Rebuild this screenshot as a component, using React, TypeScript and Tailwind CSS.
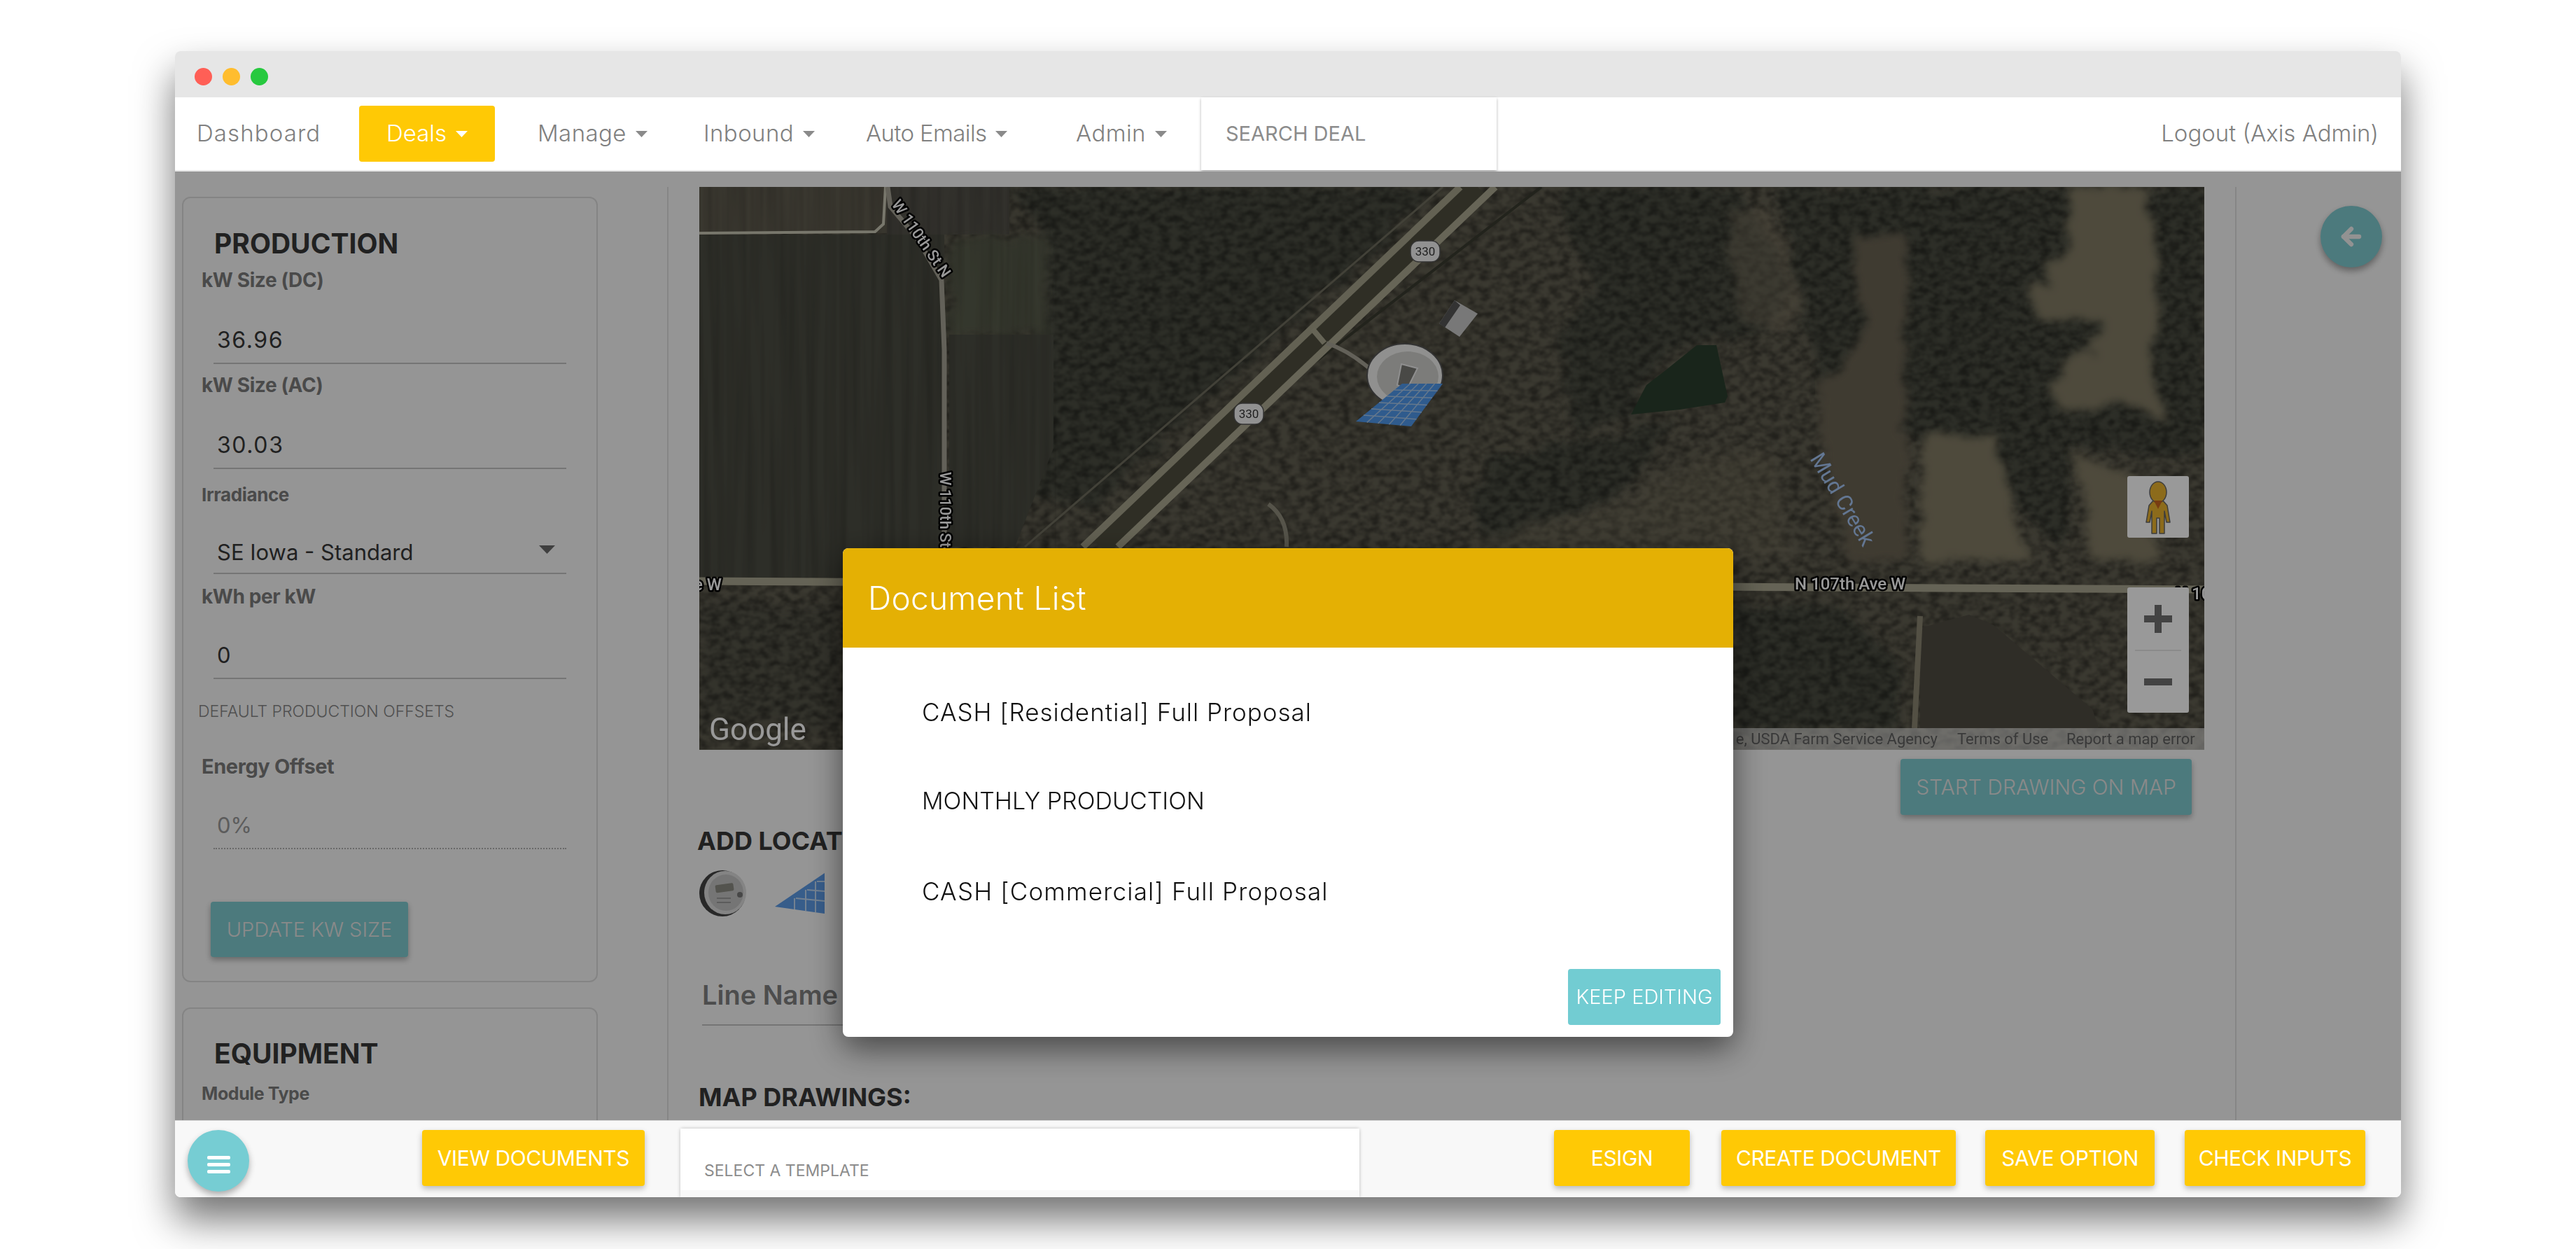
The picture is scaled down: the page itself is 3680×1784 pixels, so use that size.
import { ArrowLeft } from "lucide-react";

function Caret({ className = "text-[#8a8a8a]" }: { className?: string }) {
  return (
    <svg width="17" height="9" viewBox="0 0 17 9" className={`ml-[13px] ${className}`}>
      <polygon points="0,0 17,0 8.5,9" fill="currentColor" />
    </svg>
  );
}

function Label({ children, size = "text-[28px]" }: { children: string; size?: string }) {
  return (
    <div className={`flex h-[40px] items-center pl-[26px] font-bold tracking-[-0.4px] text-[#7c7c7c] ${size}`}>
      {children}
    </div>
  );
}

function Input({ value, h, pb, dotted, wide }: { value: string; h: string; pb: string; dotted?: boolean; wide?: boolean }) {
  return (
    <div
      className={`ml-[43px] flex w-[504px] items-end pl-[5px] leading-[32px] ${h} ${pb} ${
        wide ? "text-[32px] tracking-[1.6px]" : "text-[31px]"
      } ${dotted ? "border-b-2 border-dotted border-[#b0b0b0] text-[#9a9a9a]" : "border-b-2 border-[#c4c4c4] text-[#383838]"}`}
    >
      {value}
    </div>
  );
}

function YellowButton({ label, w }: { label: string; w: string }) {
  return (
    <div
      className={`flex h-[80px] shrink-0 items-center justify-center rounded-[4px] bg-[#ffc905] text-[30px] font-normal tracking-[-0.4px] text-white shadow-[0_4px_8px_rgba(0,0,0,0.25)] ${w}`}
    >
      {label}
    </div>
  );
}

function SolarPanel() {
  const tl = [2003, 548];
  const tr = [2061, 548];
  const br = [2016, 609];
  const bl = [1937, 602];
  const lerp = (a: number[], b: number[], t: number) => [a[0] + (b[0] - a[0]) * t, a[1] + (b[1] - a[1]) * t];
  const lines = [];
  for (let i = 1; i < 6; i++) {
    const a = lerp(tl, bl, i / 6);
    const b = lerp(tr, br, i / 6);
    lines.push(<line key={`r${i}`} x1={a[0]} y1={a[1]} x2={b[0]} y2={b[1]} stroke="#a9c8ea" strokeWidth="1.5" />);
  }
  for (let i = 1; i < 5; i++) {
    const a = lerp(tl, tr, i / 5);
    const b = lerp(bl, br, i / 5);
    lines.push(<line key={`c${i}`} x1={a[0]} y1={a[1]} x2={b[0]} y2={b[1]} stroke="#a9c8ea" strokeWidth="1.5" />);
  }
  return (
    <g>
      <polygon points="2003,548 2061,548 2016,609 1937,602" fill="#4f98ec" />
      {lines}
    </g>
  );
}

function MapLabel({ x, y, text, rotate = 0, size = 22, anchor = "start" }: { x: number; y: number; text: string; rotate?: number; size?: number; anchor?: "start" | "end" }) {
  return (
    <text
      transform={`translate(${x},${y}) rotate(${rotate})`}
      textAnchor={anchor}
      fontSize={size}
      fontFamily="Roboto, sans-serif"
      fontWeight="500"
      fill="#fff"
      stroke="#000"
      strokeWidth="5"
      paintOrder="stroke"
      strokeLinejoin="round"
    >
      {text}
    </text>
  );
}

function Shield({ x, y }: { x: number; y: number }) {
  return (
    <g>
      <rect x={x - 21} y={y - 15} width="42" height="30" rx="12" fill="#f2f2f2" stroke="#555" strokeWidth="1.5" />
      <text x={x} y={y + 6} textAnchor="middle" fontSize="17" fontFamily="Roboto, sans-serif" fill="#333">
        330
      </text>
    </g>
  );
}

function MapPicture() {
  return (
    <svg viewBox="999 267 2150 804" className="block h-[804px] w-[2150px]">
      <defs>
        <filter id="rough" x="-5%" y="-5%" width="110%" height="110%">
          <feTurbulence type="fractalNoise" baseFrequency="0.02 0.03" numOctaves="4" seed="4" />
          <feDisplacementMap in="SourceGraphic" scale="34" />
          <feGaussianBlur stdDeviation="6" />
        </filter>
        <filter id="mottle" x="0" y="0" width="100%" height="100%">
          <feTurbulence type="fractalNoise" baseFrequency="0.07 0.11" numOctaves="3" seed="9" />
          <feColorMatrix values="0 0 0 0 0  0 0 0 0 0  0 0 0 0 0  2.4 0 0 0 -0.85" />
          <feGaussianBlur stdDeviation="1.2" />
        </filter>
        <filter id="stripes" x="0" y="0" width="100%" height="100%">
          <feTurbulence type="fractalNoise" baseFrequency="0.09 0.003" numOctaves="2" seed="3" />
          <feColorMatrix values="0 0 0 0 0  0 0 0 0 0  0 0 0 0 0  1.6 0 0 0 -0.55" />
        </filter>
      </defs>

      <rect x="999" y="267" width="2150" height="804" fill="#625f51" />

      <g filter="url(#rough)" fill="#4c4e42">
        <polygon points="1440,267 2060,267 1700,590 1560,720 1480,720 1490,600 1470,500 1500,430 1490,330" />
        <polygon points="2240,267 2480,267 2560,400 2520,470 2380,500 2330,590 2250,620 2230,480 2280,400 2240,340" />
        <polygon points="2140,650 2320,620 2400,590 2300,720 2120,780 2100,700" />
        <polygon points="2540,267 3149,267 3149,650 2960,640 2950,790 2860,700 2730,620 2600,560" />
        <polygon points="2479,870 2620,860 2716,950 2716,1040 2479,1040" />
        <polygon points="999,860 1204,860 1204,1040 999,1040" fill="#565549" />
      </g>

      <rect x="999" y="267" width="2150" height="804" filter="url(#mottle)" opacity="0.42" />

      {/* open ground stays smoother than the tree cover */}
      <g filter="url(#rough)" fill="#827b65">
        <polygon points="2959,267 3067,267 3087,463 3067,530 3094,598 3026,581 2938,581 2925,547 3000,490 3006,459 2911,456 2898,412 2952,361" />
        <polygon points="2749,618 2850,618 2885,760 2905,800 2745,800 2745,700" />
        <polygon points="2965,650 3050,680 3090,800 2990,800" />
        <polygon points="2465,294 2530,300 2590,460 2550,470 2490,460 2470,370" opacity="0.45" />
        <polygon points="2100,770 2300,720 2440,650 2540,650 2560,800 2100,800" opacity="0.3" />
      </g>
      <g filter="url(#rough)" fill="#6b6352">
        <polygon points="2648,334 2722,334 2720,600 2730,800 2640,800 2600,620 2600,550 2660,480" />
      </g>

      {/* flat fields left of the county road */}
      <rect x="999" y="267" width="268" height="66" fill="#605c4f" />
      <rect x="1267" y="267" width="175" height="68" fill="#54524a" />
      <rect x="999" y="335" width="350" height="490" fill="#4c4d43" />
      <polygon points="1356,336 1497,336 1497,478 1356,478" fill="#595b4c" filter="url(#rough)" />
      <polygon points="1356,478 1505,478 1505,640 1450,781 1356,781" fill="#4c4d43" />
      <rect x="999" y="267" width="510" height="560" filter="url(#stripes)" opacity="0.2" />
      <polygon points="2743,897 2813,878 2848,893 2989,1013 2998,1040 2743,1040" fill="#4f4b42" />

      {/* roads */}
      <polyline points="999,333 1250,331 1262,320 1265,267" fill="none" stroke="#c9c6b4" strokeWidth="4" />
      <polyline points="1268,267 1272,295 1310,340 1345,400 1349,500 1349,825" fill="none" stroke="#a5a294" strokeWidth="7" />
      <line x1="999" y1="830" x2="3149" y2="842" stroke="#a9a68f" strokeWidth="11" />
      <line x1="2061" y1="267" x2="1464" y2="781" stroke="#6f6d5e" strokeWidth="3" />
      <line x1="2202" y1="267" x2="1854" y2="536" stroke="#3a3b30" strokeWidth="4" />
      <line x1="2111" y1="267" x2="1572" y2="781" stroke="#4f4e3f" strokeWidth="30" />
      <line x1="2086" y1="267" x2="1547" y2="781" stroke="#a5a28b" strokeWidth="10" />
      <line x1="2136" y1="267" x2="1597" y2="781" stroke="#aca991" strokeWidth="10" />
      <line x1="1875" y1="470" x2="1892" y2="490" stroke="#aaa78f" strokeWidth="8" />
      <path d="M1895 490 Q1925 500 1955 525" fill="none" stroke="#a5a294" strokeWidth="6" />
      <path d="M1812 720 Q1840 740 1838 781" fill="none" stroke="#8f8c7c" strokeWidth="6" />
      <path d="M2743 880 L2735 1040" fill="none" stroke="#8a8572" strokeWidth="8" />

      {/* buildings and pond */}
      <polygon points="2424,493 2452,493 2468,566 2464,575 2400,585 2330,592 2352,550 2378,530" fill="#2b3f2d" />
      <polygon points="2078,429 2111,448 2085,481 2056,462" fill="#c8c8c8" />
      <polygon points="2078,429 2056,462 2064,468 2086,436" fill="#555" />
      <ellipse cx="2007" cy="536" rx="54" ry="45" fill="#f0f0ee" stroke="#555" strokeWidth="2" />
      <ellipse cx="2011" cy="538" rx="44" ry="36" fill="#cfcfcb" />
      <polygon points="2002,520 2025,526 2010,556 1996,550" fill="#7a7a76" stroke="#eee" strokeWidth="2" />
      <SolarPanel />

      <Shield x={2036} y={359} />
      <Shield x={1784} y={591} />
      <MapLabel x={1273} y={292} text="W 110th St N" rotate={55} />
      <MapLabel x={1343} y={674} text="W 110th St" rotate={90} />
      <MapLabel x={1031} y={843} text="N 107th Ave W" anchor="end" size={24} />
      <MapLabel x={2564} y={842} text="N 107th Ave W" size={24} />
      <MapLabel x={3108} y={856} text="N 107th" size={24} />
      <text transform="translate(2585,655) rotate(59)" fontSize="31" fontFamily="Roboto, sans-serif" fill="#a6c6f5">
        Mud Creek
      </text>
      <text x="1013" y="1057" fontSize="44" fontFamily="Roboto, sans-serif" fontWeight="400" fill="#fff">
        Google
      </text>

      {/* attribution strip */}
      <rect x="2400" y="1040" width="749" height="31" fill="#fff" opacity="0.55" />
      <g fontSize="22" fontFamily="Roboto, sans-serif" fill="#606060">
        <text x="2768" y="1063" textAnchor="end">
          e, USDA Farm Service Agency
        </text>
        <text x="2796" y="1063">Terms of Use</text>
        <text x="2952" y="1063">Report a map error</text>
      </g>
    </svg>
  );
}

function Pegman() {
  return (
    <svg viewBox="0 0 88 88" className="h-[88px] w-[88px]">
      <g stroke="#666" strokeWidth="1.5" strokeLinejoin="round">
        <path d="M31 42 L38 34 H50 L57 42 L61 66 L56 66 L53 50 V82 H46 V60 H42 V82 H35 V50 L32 66 L27 66 Z" fill="#e9b22d" />
        <ellipse cx="44" cy="23" rx="12" ry="15" fill="#e9b22d" />
      </g>
      <polygon points="38,35 50,35 44,47" fill="#c8641e" />
    </svg>
  );
}

function MeterIcon() {
  return (
    <svg viewBox="0 0 68 67" className="h-[67px] w-[68px]">
      <ellipse cx="33" cy="34" rx="33" ry="33" fill="#444" />
      <ellipse cx="37" cy="33" rx="30" ry="31" fill="#dcdcdc" />
      <ellipse cx="38" cy="33" rx="25" ry="26" fill="#c4c4c4" />
      <rect x="23" y="21" width="26" height="11" rx="2" fill="#8b8b82" transform="rotate(-8 34 26)" />
      <circle cx="58" cy="36" r="4" fill="#777" />
      <rect x="25" y="40" width="20" height="2" fill="#999" />
      <rect x="25" y="46" width="20" height="2" fill="#999" />
    </svg>
  );
}

function SolarIcon() {
  return (
    <svg viewBox="0 0 72 58" className="ml-[40px] h-[58px] w-[72px]">
      <polygon points="71,0 71,58 0,48" fill="#5d9be6" />
      <g stroke="#c0d8f2" strokeWidth="2">
        <line x1="58" y1="12" x2="58" y2="56" />
        <line x1="44" y1="24" x2="44" y2="54" />
        <line x1="28" y1="36" x2="28" y2="52" />
        <line x1="60" y1="12" x2="71" y2="12" />
        <line x1="46" y1="24" x2="71" y2="26" />
        <line x1="30" y1="36" x2="71" y2="40" />
      </g>
    </svg>
  );
}

export default function App() {
  return (
    <div className="h-[1784px] w-[3680px] overflow-hidden bg-white pl-[250px] pt-[73px] [font-family:Inter,sans-serif]">
      <div className="flex h-[1637px] w-[3180px] flex-col overflow-hidden rounded-[8px] bg-white shadow-[0_32px_56px_rgba(0,0,0,0.55)]">
        {/* title bar */}
        <div className="flex h-[66px] shrink-0 items-center gap-[15px] bg-[#e6e6e6] pl-[28px] pt-[6px]">
          <span className="h-[25px] w-[25px] rounded-full bg-[#ff5f56]" />
          <span className="h-[25px] w-[25px] rounded-full bg-[#ffbd2e]" />
          <span className="h-[25px] w-[25px] rounded-full bg-[#27c93f]" />
        </div>

        {/* nav */}
        <div className="flex h-[106px] shrink-0 items-center border-b-2 border-[#e6e6e6] bg-white text-[33px] font-light text-[#808080]">
          <div className="ml-[31px] w-[232px] tracking-[1.1px]">Dashboard</div>
          <div className="flex h-[80px] w-[194px] items-center rounded-[4px] bg-[#ffc905] pl-[39px] text-white">
            Deals
            <Caret className="text-white" />
          </div>
          <div className="ml-[61px] flex w-[237px] items-center tracking-[0.4px]">
            Manage
            <Caret />
          </div>
          <div className="flex w-[232px] items-center tracking-[0.4px]">
            Inbound
            <Caret />
          </div>
          <div className="flex w-[300px] items-center tracking-[-0.6px]">
            Auto Emails
            <Caret />
          </div>
          <div className="flex w-[179px] items-center tracking-[0.4px]">
            Admin
            <Caret />
          </div>
          <div className="flex h-full w-[422px] items-center pl-[35px] text-[29px] font-normal text-[#8c8c8c] shadow-[0_2px_4px_rgba(0,0,0,0.3)]">
            SEARCH DEAL
          </div>
          <div className="ml-auto mr-[32px]">Logout (Axis Admin)</div>
        </div>

        {/* page, dimmed by the modal's backdrop */}
        <div className="relative flex min-h-0 flex-1 overflow-hidden bg-[#f9f9f9]">
          <div className="w-[703px] shrink-0 pl-[10px]">
            <div className="mt-[36px] h-[1122px] w-[594px] rounded-[12px] border-2 border-[#dcdcdc] pt-[45px]">
              <h2 className="ml-[44px] h-[40px] text-[39px] font-bold leading-[40px] text-[#383838]">PRODUCTION</h2>
              <div className="mt-[12px]">
                <Label>kW Size (DC)</Label>
                <Input value="36.96" h="h-[100px]" pb="pb-[16px]" wide />
              </div>
              <div className="mt-[10px]">
                <Label>kW Size (AC)</Label>
                <Input value="30.03" h="h-[100px]" pb="pb-[16px]" wide />
              </div>
              <div className="mt-[16px]">
                <Label size="text-[26px]">Irradiance</Label>
                <div className="relative">
                  <Input value="SE Iowa - Standard" h="h-[94px]" pb="pb-[13px]" />
                  <svg width="23" height="12" viewBox="0 0 23 12" className="absolute left-[508px] top-[53px] text-[#6a6a6a]">
                    <polygon points="0,0 23,0 11.5,12" fill="currentColor" />
                  </svg>
                </div>
              </div>
              <div className="mt-[12px]">
                <Label>kWh per kW</Label>
                <Input value="0" h="h-[98px]" pb="pb-[16px]" />
              </div>
              <div className="mt-[26px] flex h-[40px] items-center pl-[21px] text-[23px] font-light text-[#858585]">
                DEFAULT PRODUCTION OFFSETS
              </div>
              <div className="mt-[39px]">
                <Label size="text-[29px]">Energy Offset</Label>
                <Input value="0%" h="h-[98px]" pb="pb-[16px]" dotted />
              </div>
              <div className="ml-[39px] mt-[75px] flex h-[79px] w-[282px] items-center justify-center rounded-[4px] bg-[#7fcbd0] text-[29px] font-light text-[#e6e6e6] shadow-[0_4px_8px_rgba(0,0,0,0.3)]">
                UPDATE KW SIZE
              </div>
            </div>
            <div className="mt-[36px] h-[300px] w-[594px] rounded-[12px] border-2 border-[#dcdcdc] pt-[44px]">
              <h2 className="ml-[44px] h-[40px] text-[39px] font-bold leading-[40px] text-[#383838]">EQUIPMENT</h2>
              <div className="mt-[18px]">
                <Label size="text-[25px]">Module Type</Label>
              </div>
            </div>
          </div>

          <div className="mt-[22px] w-[2242px] shrink-0 border-x-2 border-[#e0e0e0] pl-[44px]">
            <div className="relative h-[804px] w-[2150px]">
              <MapPicture />
              <div className="absolute left-[2040px] top-[413px] h-[88px] w-[88px] rounded-[3px] bg-white">
                <Pegman />
              </div>
              <div className="absolute left-[2040px] top-[572px] flex h-[179px] w-[88px] flex-col items-center rounded-[3px] bg-white text-[#707070]">
                <div className="relative flex h-[89px] w-full items-center justify-center">
                  <div className="h-[10px] w-[40px] bg-current" />
                  <div className="absolute h-[40px] w-[10px] bg-current" />
                </div>
                <div className="h-[2px] w-[66px] bg-[#e6e6e6]" />
                <div className="flex h-[88px] w-full items-center justify-center">
                  <div className="h-[10px] w-[40px] bg-current" />
                </div>
              </div>
            </div>
            <div className="mr-[18px] mt-[13px] flex w-[2132px] justify-end">
              <div className="flex h-[80px] w-[416px] items-center justify-center rounded-[4px] bg-[#7fcbd0] text-[30px] font-light text-[#e6e6e6] shadow-[0_4px_8px_rgba(0,0,0,0.3)]">
                START DRAWING ON MAP
              </div>
            </div>
            <h3 className="-ml-[3px] mt-[15px] h-[44px] text-[36px] font-bold leading-[44px] text-[#383838]">ADD LOCATION</h3>
            <div className="mt-[19px] flex h-[67px] items-center">
              <MeterIcon />
              <SolarIcon />
            </div>
            <div className="ml-[4px] mt-[76px] flex h-[80px] w-[700px] items-center border-b-2 border-[#c4c4c4] pb-[6px] text-[38px] font-semibold text-[#808080]">
              Line Name
            </div>
            <h3 className="-ml-[1px] mt-[80px] h-[44px] text-[36px] font-bold leading-[44px] text-[#383838]">MAP DRAWINGS:</h3>
          </div>

          <div className="flex-1 pl-[120px] pt-[49px]">
            <div className="flex h-[88px] w-[88px] items-center justify-center rounded-full bg-[#7fcbd0] text-[#f4f4f4] shadow-[0_5px_10px_rgba(0,0,0,0.35)]">
              <ArrowLeft size={38} strokeWidth={4} />
            </div>
          </div>

          {/* backdrop and modal */}
          <div className="absolute inset-0 flex justify-center bg-black/40">
            <div className="mt-[538px] h-[698px] w-[1272px] overflow-hidden rounded-[8px] bg-white shadow-[0_16px_48px_rgba(0,0,0,0.55)]">
              <div className="flex h-[142px] items-center bg-[#e4b004] pl-[36px] text-[46px] font-light tracking-[0.3px] text-white">
                Document List
              </div>
              <div className="flex flex-col pl-[113px] pt-[72px] font-light leading-[40px] text-[#111]">
                <div className="h-[127px] text-[35px] tracking-[1px]">CASH [Residential] Full Proposal</div>
                <div className="h-[129px] text-[34px]">MONTHLY PRODUCTION</div>
                <div className="text-[35px] tracking-[1.2px]">CASH [Commercial] Full Proposal</div>
              </div>
              <div className="mt-[91px] flex justify-end pr-[18px]">
                <div className="flex h-[80px] w-[218px] items-center justify-center rounded-[4px] bg-[#72ccd2] text-[29px] font-light text-white">
                  KEEP EDITING
                </div>
              </div>
            </div>
          </div>
        </div>

        {/* bottom bar */}
        <div className="flex h-[110px] shrink-0 items-start border-t border-[#d8d8d8] bg-[#f8f8f8] pt-[13px]">
          <div className="ml-[18px] flex h-[88px] w-[88px] shrink-0 flex-col items-center justify-center gap-[5px] rounded-full bg-[#76cdd3] pt-[10px] shadow-[0_5px_10px_rgba(0,0,0,0.3)]">
            <span className="h-[5px] w-[33px] rounded-[2px] bg-white" />
            <span className="h-[5px] w-[33px] rounded-[2px] bg-white" />
            <span className="h-[5px] w-[33px] rounded-[2px] bg-white" />
          </div>
          <div className="ml-[247px]">
            <YellowButton label="VIEW DOCUMENTS" w="w-[318px]" />
          </div>
          <div className="-mt-[2px] ml-[51px] h-[98px] w-[970px] shrink-0 rounded-t-[3px] shadow-[0_0_5px_rgba(0,0,0,0.25)]">
            <div className="flex h-[88px] items-end bg-white pb-[11px] pl-[34px] text-[23px] text-[#8c8c8c]">
              SELECT A TEMPLATE
            </div>
          </div>
          <div className="ml-auto mr-[51px] flex">
            <YellowButton label="ESIGN" w="w-[194px]" />
            <div className="ml-[45px]">
              <YellowButton label="CREATE DOCUMENT" w="w-[335px]" />
            </div>
            <div className="ml-[42px]">
              <YellowButton label="SAVE OPTION" w="w-[242px]" />
            </div>
            <div className="ml-[43px]">
              <YellowButton label="CHECK INPUTS" w="w-[258px]" />
            </div>
          </div>
        </div>
      </div>
    </div>
  );
}
